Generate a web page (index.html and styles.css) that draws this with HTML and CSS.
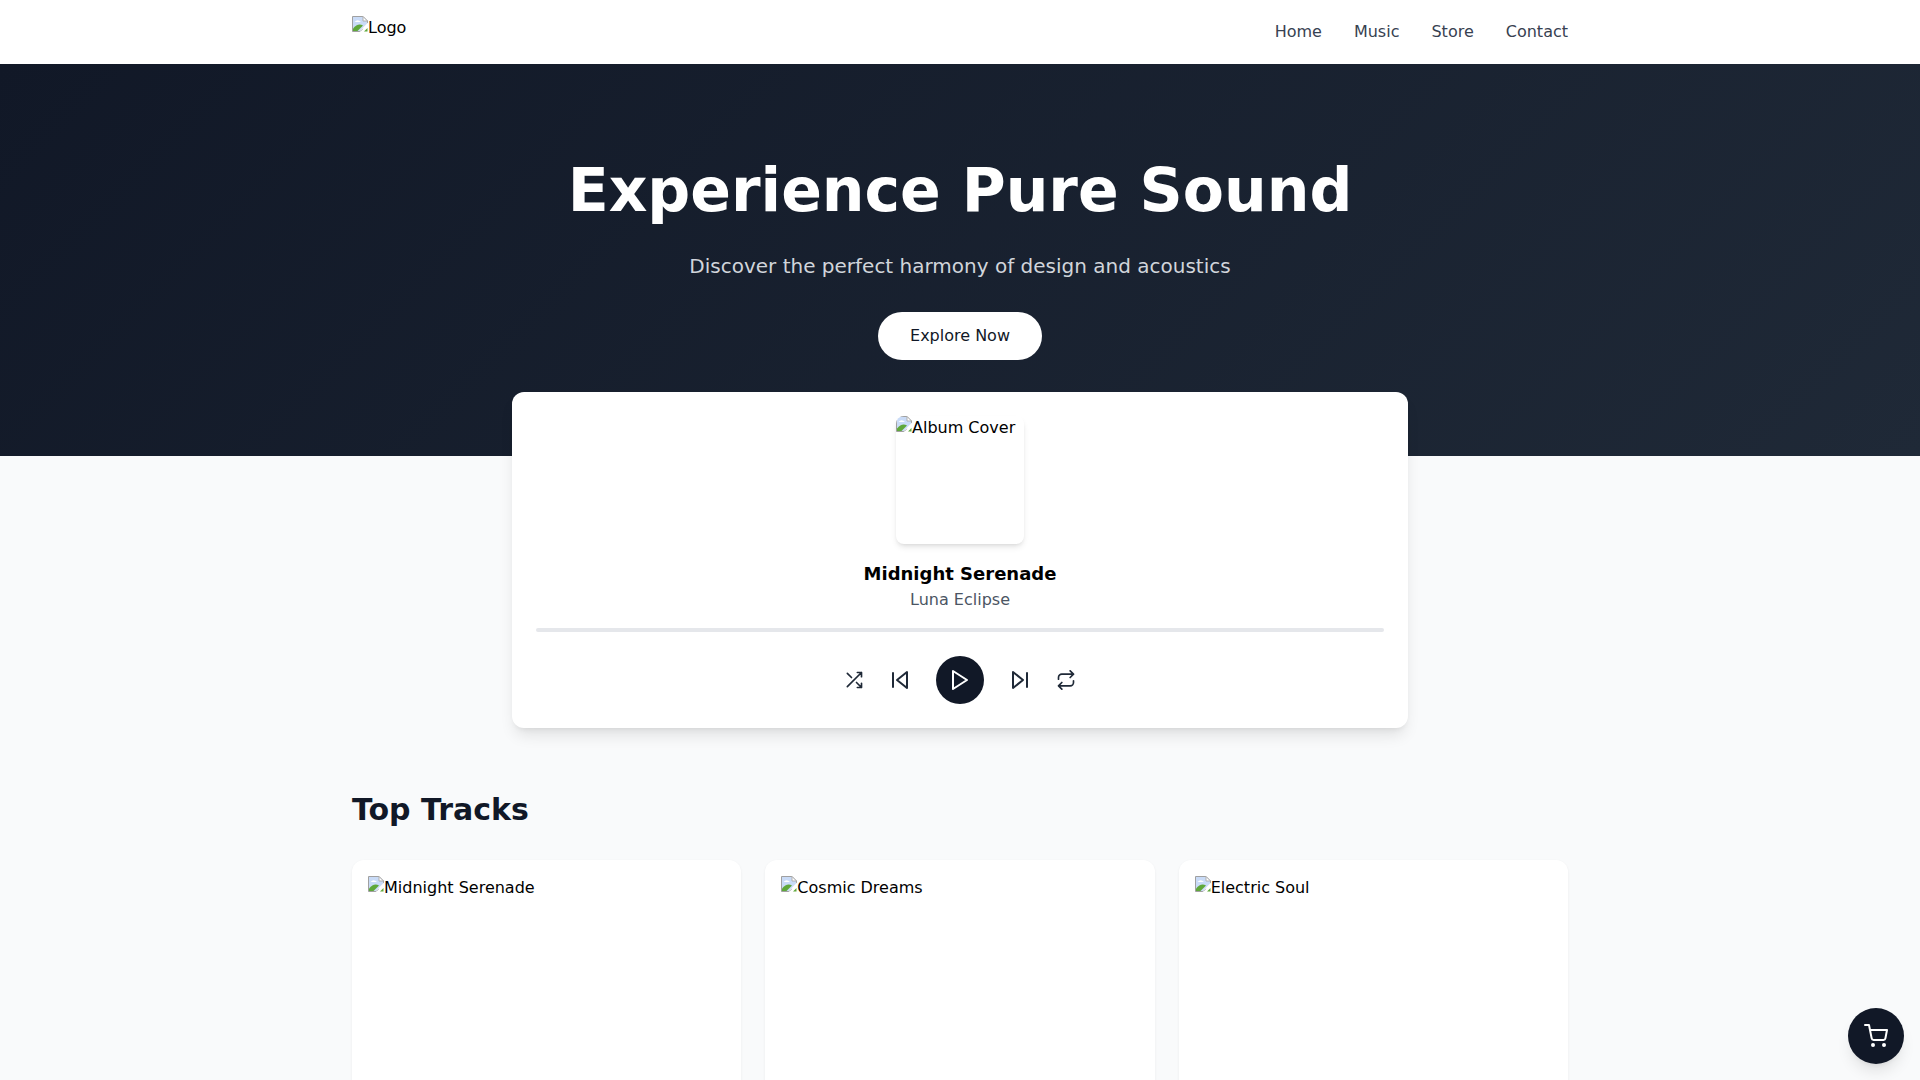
FILE: index.html
```html
<!DOCTYPE html>
<html lang="en">
<head>
<meta charset="utf-8">
<title>Experience Pure Sound</title>
<link rel="stylesheet" href="styles.css">
</head>
<body>
<svg class="defs" width="0" height="0" aria-hidden="true">
  <symbol id="broken" viewBox="0 0 16 16">
    <path d="M0.5 0.5H11L15.5 5V8L8 15.5H0.5Z" fill="#c9dbf7" stroke="#a0a0a0"/>
    <path d="M11 0.5V5H15.5Z" fill="#fff" stroke="#b0b0b0"/>
    <path d="M2.5 6Q5.5 2.5 9 6H2.5Z" fill="#fff"/>
    <path d="M1 15V12.5Q6 6.5 11 9.5L5.5 15Z" fill="#5fa83a"/>
    <path d="M6.5 16L16 6.5V16H12L13.5 14.5L11 12.5Z" fill="#fff"/>
    <path d="M12 15.5L15.5 12V15.5Z" fill="#5fa83a"/>
  </symbol>
</svg>
<header class="site-header">
  <div class="container header-inner">
    <a class="logo alt-img"><svg class="broken"><use href="#broken"/></svg>Logo</a>
    <nav class="nav">
      <a>Home</a><a>Music</a><a>Store</a><a>Contact</a>
    </nav>
  </div>
</header>
<section class="hero">
  <h1>Experience Pure Sound</h1>
  <p>Discover the perfect harmony of design and acoustics</p>
  <button class="cta">Explore Now</button>
</section>
<section class="player">
  <div class="album alt-img"><svg class="broken"><use href="#broken"/></svg>Album Cover</div>
  <h2 class="track-title">Midnight Serenade</h2>
  <p class="track-artist">Luna Eclipse</p>
  <div class="progress"></div>
  <div class="controls">
    <svg class="ctl ctl-sm" viewBox="0 0 24 24"><path d="M16 3h5v5M4 20 21 3M21 16v5h-5M15 15l6 6M4 4l5 5"/></svg>
    <svg class="ctl" viewBox="0 0 24 24"><path d="M19 20 9 12l10-8v16ZM5 19V5"/></svg>
    <span class="play"><svg class="ctl-play" viewBox="0 0 24 24"><path d="M5 3l14 9-14 9V3Z"/></svg></span>
    <svg class="ctl" viewBox="0 0 24 24"><path d="M5 4l10 8-10 8V4ZM19 5v14"/></svg>
    <svg class="ctl ctl-sm" viewBox="0 0 24 24"><path d="m17 1 4 4-4 4M3 11V9a4 4 0 0 1 4-4h14M7 23l-4-4 4-4M21 13v2a4 4 0 0 1-4 4H3"/></svg>
  </div>
</section>
<main class="container tracks">
  <h2>Top Tracks</h2>
  <div class="track-grid">
    <article class="card"><div class="alt-img"><svg class="broken"><use href="#broken"/></svg>Midnight Serenade</div></article>
    <article class="card"><div class="alt-img"><svg class="broken"><use href="#broken"/></svg>Cosmic Dreams</div></article>
    <article class="card"><div class="alt-img"><svg class="broken"><use href="#broken"/></svg>Electric Soul</div></article>
  </div>
</main>
<button class="cart" aria-label="Cart">
  <svg viewBox="0 0 24 24"><circle cx="9" cy="21" r="1"/><circle cx="20" cy="21" r="1"/><path d="M1 1h4l2.68 13.39a2 2 0 0 0 2 1.61h9.72a2 2 0 0 0 2-1.61L23 6H6"/></svg>
</button>
</body>
</html>
```
FILE: styles.css
```css
* { box-sizing: border-box; margin: 0; padding: 0; }
html, body { height: 1080px; overflow: hidden; }
body {
  font-family: "DejaVu Sans", sans-serif;
  font-size: 16px;
  line-height: 24px;
  color: #000;
  background: #f9fafb;
}
.defs { position: absolute; }
.container { width: 1216px; margin: 0 auto; }
.site-header {
  height: 64px;
  background: #fff;
}
.header-inner {
  display: flex;
  justify-content: space-between;
  padding-top: 16px;
}
.alt-img { display: block; white-space: nowrap; }
.broken { width: 16px; height: 16px; display: inline-block; vertical-align: 1px; }
.nav { display: flex; gap: 32px; padding-top: 4px; color: #374151; }
.nav a { display: block; }
.hero {
  height: 392px;
  padding-top: 96px;
  text-align: center;
  color: #fff;
  background: linear-gradient(135deg, #111827, #1f2937);
}
.hero h1 {
  font-size: 60px;
  line-height: 60px;
  font-weight: 700;
  margin-bottom: 32px;
}
.hero p {
  font-size: 20px;
  line-height: 28px;
  color: #d1d5db;
  margin-bottom: 32px;
}
.cta {
  display: inline-block;
  font: inherit;
  color: #111827;
  background: #fff;
  border: 0;
  border-radius: 9999px;
  padding: 12px 32px;
}
.player {
  position: relative;
  width: 896px;
  height: 336px;
  margin: -64px auto 0;
  padding: 24px;
  background: #fff;
  border-radius: 12px;
  box-shadow: 0 10px 15px -3px rgba(0,0,0,.1), 0 4px 6px -4px rgba(0,0,0,.1);
  text-align: center;
}
.album {
  width: 128px;
  height: 128px;
  margin: 0 auto 16px;
  text-align: left;
  border-radius: 8px;
  box-shadow: 0 4px 6px -1px rgba(0,0,0,.1), 0 2px 4px -2px rgba(0,0,0,.1);
  overflow: hidden;
}
.track-title { font-size: 18px; line-height: 28px; font-weight: 700; }
.track-artist { color: #4b5563; }
.progress {
  height: 4px;
  margin-top: 16px;
  background: #e5e7eb;
  border-radius: 9999px;
}
.controls {
  display: flex;
  justify-content: center;
  align-items: center;
  gap: 24px;
  margin-top: 24px;
}
.ctl {
  width: 24px;
  height: 24px;
  fill: none;
  stroke: #1f2937;
  stroke-width: 2;
  stroke-linecap: round;
  stroke-linejoin: round;
}
.ctl-sm { width: 20px; height: 20px; }
.play {
  width: 48px;
  height: 48px;
  border-radius: 50%;
  background: #111827;
  display: flex;
  align-items: center;
  justify-content: center;
}
.ctl-play {
  width: 24px;
  height: 24px;
  fill: none;
  stroke: #fff;
  stroke-width: 2;
  stroke-linecap: round;
  stroke-linejoin: round;
}
.tracks { padding-top: 64px; }
.tracks h2 {
  font-size: 30px;
  line-height: 36px;
  font-weight: 700;
  color: #111827;
  margin-bottom: 32px;
}
.track-grid { display: grid; grid-template-columns: repeat(3, 1fr); gap: 24px; }
.card {
  height: 420px;
  padding: 16px;
  background: #fff;
  border-radius: 12px;
  box-shadow: 0 1px 3px rgba(0,0,0,.06);
}
.cart {
  position: fixed;
  right: 16px;
  bottom: 16px;
  width: 56px;
  height: 56px;
  border: 0;
  border-radius: 50%;
  background: #111827;
  display: flex;
  align-items: center;
  justify-content: center;
  box-shadow: 0 10px 15px -3px rgba(0,0,0,.1), 0 4px 6px -4px rgba(0,0,0,.1);
}
.cart svg {
  width: 24px;
  height: 24px;
  fill: none;
  stroke: #fff;
  stroke-width: 2;
  stroke-linecap: round;
  stroke-linejoin: round;
}
```
